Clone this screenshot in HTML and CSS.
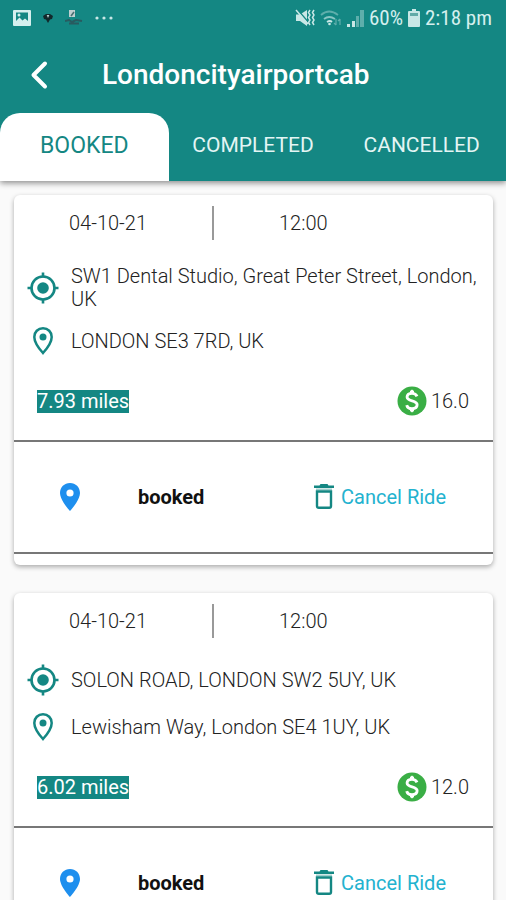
FILE: index.html
```html
<!DOCTYPE html>
<html lang="en">
  <head>
    <meta charset="UTF-8" />
    <meta name="viewport" content="width=device-width, initial-scale=1.0" />
    <title>Londoncityairportcab</title>
    <link rel="stylesheet" href="styles.css">
  </head>
  <body>
    <!-- shared icons -->
    <svg class="sprite" aria-hidden="true">
      <symbol id="target" viewBox="0 0 32 32">
        <circle cx="16" cy="16" r="11.5" fill="none" stroke="currentColor" stroke-width="2.6" />
        <circle cx="16" cy="16" r="5.8" fill="currentColor" />
        <path d="M16 .5v5M16 26.500v5M.5 16h5M26.500 16h5" stroke="currentColor" stroke-width="2.6" />
      </symbol>
      <symbol id="place" viewBox="0 0 32 32">
        <path d="M16 3.200c-5 0-8.700 3.900-8.700 8.700C7.300 18.200 16 28 16 28s8.700-9.800 8.700-16.100c0-4.800-3.700-8.700-8.700-8.700z" fill="none" stroke="currentColor" stroke-width="2.500" />
        <circle cx="16" cy="12" r="3.500" fill="currentColor" />
      </symbol>
      <symbol id="pin" viewBox="0 0 24 32">
        <path fill-rule="evenodd" d="M12 2C6.300 2 2 6.300 2 12c0 7.300 10 18 10 18s10-10.700 10-18c0-5.700-4.300-10-10-10zm0 6.400a3.600 3.600 0 1 1 0 7.200 3.600 3.600 0 0 1 0-7.200z" fill="currentColor" />
      </symbol>
      <symbol id="dollar" viewBox="0 0 30 30">
        <circle cx="15" cy="15" r="14.500" fill="currentColor" />
        <path d="M20 10.400C19.200 8.400 17.400 7.400 15 7.400c-2.800 0-4.900 1.400-4.900 3.700 0 5 10 2.700 10 7.700 0 2.500-2.200 3.900-5.100 3.900-2.700 0-4.700-1.300-5.300-3.600" fill="none" stroke="#fff" stroke-width="2.900" />
        <path d="M13 8V5l2-1.500L17 5v3zM13 22v3l2 1.500 2-1.500v-3z" fill="#fff" />
      </symbol>
      <symbol id="trash" viewBox="0 0 20 28">
        <path d="M6.500 1h7l1 1.600H20v2.300H0V2.600h5.500z" fill="currentColor" />
        <path d="M3 8.500h14V23c0 1.200-.6 1.800-1.800 1.800H4.800C3.600 24.800 3 24.200 3 23z" fill="none" stroke="currentColor" stroke-width="2.400" />
        <path d="M2 5.500h16v1.800H2z" fill="currentColor" opacity=".4" />
      </symbol>
    </svg>

    <header class="app-header">
      <div class="status-bar">
        <div class="notifications">
          <svg width="18" height="16" viewBox="0 0 18 16">
            <path fill="#d5efee" fill-rule="evenodd" d="M1 0h16q1 0 1 1v14q0 1-1 1H1q-1 0-1-1V1q0-1 1-1zm2 2.500V11l3.500-3.500 3 3 2.500-2 3 2.500V2.500z" />
            <circle cx="6" cy="5" r="1.500" fill="#d5efee" />
          </svg>
          <svg width="10" height="10" viewBox="0 0 10 10">
            <path fill="#12282b" d="M3 1h4l3 2-1 3-2 .5L5 10 3 6.500 1 6 0 3z" />
            <path fill="#b9cfcf" d="M3.700 2h2.600L5 5z" />
          </svg>
          <svg width="18" height="16" viewBox="0 0 18 16">
            <path fill="#bfcfd0" d="M4 0h6v7H4z" />
            <path d="M6 6l3-4" stroke="#486f72" stroke-width="1.500" />
            <path d="M0 11l4-1 3 2 4-2 6 1M4 13.500h10" fill="none" stroke="#285b60" stroke-width="2" />
          </svg>
          <svg width="18" height="4" viewBox="0 0 18 4" fill="#c9e7e6">
            <circle cx="2" cy="2" r="1.600" /><circle cx="9" cy="2" r="1.600" /><circle cx="16" cy="2" r="1.600" />
          </svg>
        </div>
        <div class="system">
          <svg width="20" height="18" viewBox="0 0 20 18">
            <path fill="#c9e7e6" d="M1 5.500h4L12 1v16l-7-5H1z" />
            <path d="M2 0l12 14" stroke="#148783" stroke-width="1.500" />
            <path d="M1 1l12 14M15 1l-1.500 2.500L15 6l-1.500 2.500L15 11l-1.500 2.500L15 16M19 1l-1.500 2.500L19 6l-1.500 2.500L19 11l-1.500 2.500L19 16" fill="none" stroke="#c9e7e6" stroke-width="1.500" />
          </svg>
          <svg width="22" height="17" viewBox="0 0 22 17" fill="none" stroke-width="1.800">
            <path d="M1 5Q9-2 18 5" stroke="#5eaeab" />
            <path d="M4 9q5-4 11 0" stroke="#8ac6c3" />
            <path d="M7 12q3-2 5 0" stroke="#c9e7e6" />
            <circle cx="9.500" cy="14" r="1.300" fill="#c9e7e6" />
            <path d="M16 9v6m-2-2l2 2M20 15V9m-2 2l2-2" stroke="#5eaeab" stroke-width="1.200" />
          </svg>
          <svg width="17" height="17" viewBox="0 0 17 17">
            <path fill="#c9e7e6" d="M0 14h3v3H0zM5 11h3v6H5z" />
            <path fill="#5eaeab" d="M9 6h3v11H9zM13 0h4v17h-4z" />
          </svg>
          <span>60%</span>
          <svg width="12" height="18" viewBox="0 0 12 18">
            <path fill="#c9e7e6" d="M4 0h4v2h3q1 0 1 1v14q0 1-1 1H1q-1 0-1-1V3q0-1 1-1h3z" />
            <path fill="#62aaa7" d="M2 4h8v3H2z" />
          </svg>
          <time>2:18 pm</time>
        </div>
      </div>
      <div class="title-bar">
        <button class="back" aria-label="Back">
          <svg width="18" height="30" viewBox="0 0 18 30"><path d="M15 3.500L3.500 15 15 26.500" fill="none" stroke="#fff" stroke-width="4" stroke-linecap="round" stroke-linejoin="round" /></svg>
        </button>
        <h1>Londoncityairportcab</h1>
      </div>
      <nav class="tabs">
        <button class="active">BOOKED</button>
        <button>COMPLETED</button>
        <button>CANCELLED</button>
      </nav>
    </header>

    <main>
      <article class="ride">
        <div class="when">
          <time>04-10-21</time>
          <time>12:00</time>
        </div>
        <ul class="places">
          <li><svg class="icon"><use href="#target" /></svg><span>SW1 Dental Studio, Great Peter Street, London, UK</span></li>
          <li><svg class="icon"><use href="#place" /></svg><span>LONDON SE3 7RD, UK</span></li>
        </ul>
        <div class="fare">
          <span class="miles">7.93 miles</span>
          <span class="price"><svg class="dollar"><use href="#dollar" /></svg>16.0</span>
        </div>
        <footer>
          <svg class="pin"><use href="#pin" /></svg>
          <strong>booked</strong>
          <button class="cancel"><svg class="trash"><use href="#trash" /></svg>Cancel Ride</button>
        </footer>
      </article>

      <article class="ride">
        <div class="when">
          <time>04-10-21</time>
          <time>12:00</time>
        </div>
        <ul class="places">
          <li><svg class="icon"><use href="#target" /></svg><span>SOLON ROAD, LONDON SW2 5UY, UK</span></li>
          <li><svg class="icon"><use href="#place" /></svg><span>Lewisham Way, London SE4 1UY, UK</span></li>
        </ul>
        <div class="fare">
          <span class="miles">6.02 miles</span>
          <span class="price"><svg class="dollar"><use href="#dollar" /></svg>12.0</span>
        </div>
        <footer>
          <svg class="pin"><use href="#pin" /></svg>
          <strong>booked</strong>
          <button class="cancel"><svg class="trash"><use href="#trash" /></svg>Cancel Ride</button>
        </footer>
      </article>
    </main>
  </body>
</html>
```
FILE: styles.css
```css
* {
  box-sizing: border-box;
}
body {
  margin: 0;
  height: 100dvh;
  display: flex;
  flex-direction: column;
  overflow: hidden;
  background: #fafafa;
  color: #222;
  font-family: Roboto, sans-serif;
  font-size: 20px;
  line-height: 23px;
}
button {
  border: 0;
  padding: 0;
  background: none;
  font: inherit;
  cursor: pointer;
}
.sprite {
  display: none;
}
.app-header {
  flex: none;
  z-index: 1;
  background: #148783;
  color: #fff;
  box-shadow: 0 2px 6px rgba(0, 0, 0, 0.45);
}
.status-bar {
  display: flex;
  justify-content: space-between;
  align-items: center;
  height: 36px;
  padding: 0 14px 0 13px;
  color: #d5efee;
}
.notifications {
  display: flex;
  align-items: center;
  gap: 12px;
}
.system {
  display: flex;
  align-items: center;
  gap: 5px;
  font-family: "Roboto Condensed", Roboto, sans-serif;
  font-size: 21px;
}
.title-bar {
  display: flex;
  align-items: center;
  height: 77px;
  padding-left: 30px;
  gap: 54px;
  .back {
    display: flex;
  }
  h1 {
    margin: 0;
    font-size: 28px;
    font-weight: 500;
  }
}
.tabs {
  display: grid;
  grid-template-columns: repeat(3, 1fr);
  height: 68px;
  button {
    padding-bottom: 3px;
    color: #e3f5f4;
    font-size: 21px;
  }
  .active {
    background: #fff;
    color: #148783;
    border-radius: 20px 20px 0 0;
    font-size: 23px;
  }
}
main {
  flex: 1;
  min-height: 0;
  overflow: hidden;
  padding: 14px 13px 0 14px;
}
.ride {
  background: #fff;
  border-radius: 6px;
  box-shadow: 0 2px 5px rgba(0, 0, 0, 0.32);
  padding: 11px 0;
  margin-bottom: 28px;
}
.when {
  display: grid;
  grid-template-columns: 200px 1fr;
  line-height: 34px;
  font-weight: 300;
  time:first-child {
    padding-left: 55px;
    border-right: 2px solid #999;
  }
  time:last-child {
    padding-left: 65px;
  }
}
.places {
  display: flex;
  flex-direction: column;
  gap: 13px;
  list-style: none;
  margin: 25px 0 28px;
  padding: 0 13px;
  font-weight: 300;
  li {
    display: flex;
    align-items: center;
    gap: 12px;
    min-height: 34px;
  }
}
.icon {
  flex: none;
  width: 32px;
  height: 32px;
  color: #148783;
}
.fare {
  display: flex;
  justify-content: space-between;
  align-items: center;
  padding: 0 24px 24px 23px;
}
.miles {
  background: #148783;
  color: #fff;
}
.price {
  display: flex;
  align-items: center;
  gap: 4px;
  font-weight: 300;
}
.dollar {
  width: 30px;
  height: 30px;
  color: #3aae45;
}
footer {
  display: flex;
  align-items: center;
  height: 114px;
  padding: 0 47px 0 44px;
  border-top: 2px solid #777;
  border-bottom: 2px solid #777;
  strong {
    margin-left: 56px;
    color: #111;
    font-weight: 700;
  }
}
.pin {
  width: 24px;
  height: 32px;
  color: #1e8fee;
}
.cancel {
  display: flex;
  align-items: center;
  gap: 7px;
  margin-left: auto;
  color: #23b2cf;
}
.trash {
  width: 20px;
  height: 28px;
  color: #148783;
}
```
